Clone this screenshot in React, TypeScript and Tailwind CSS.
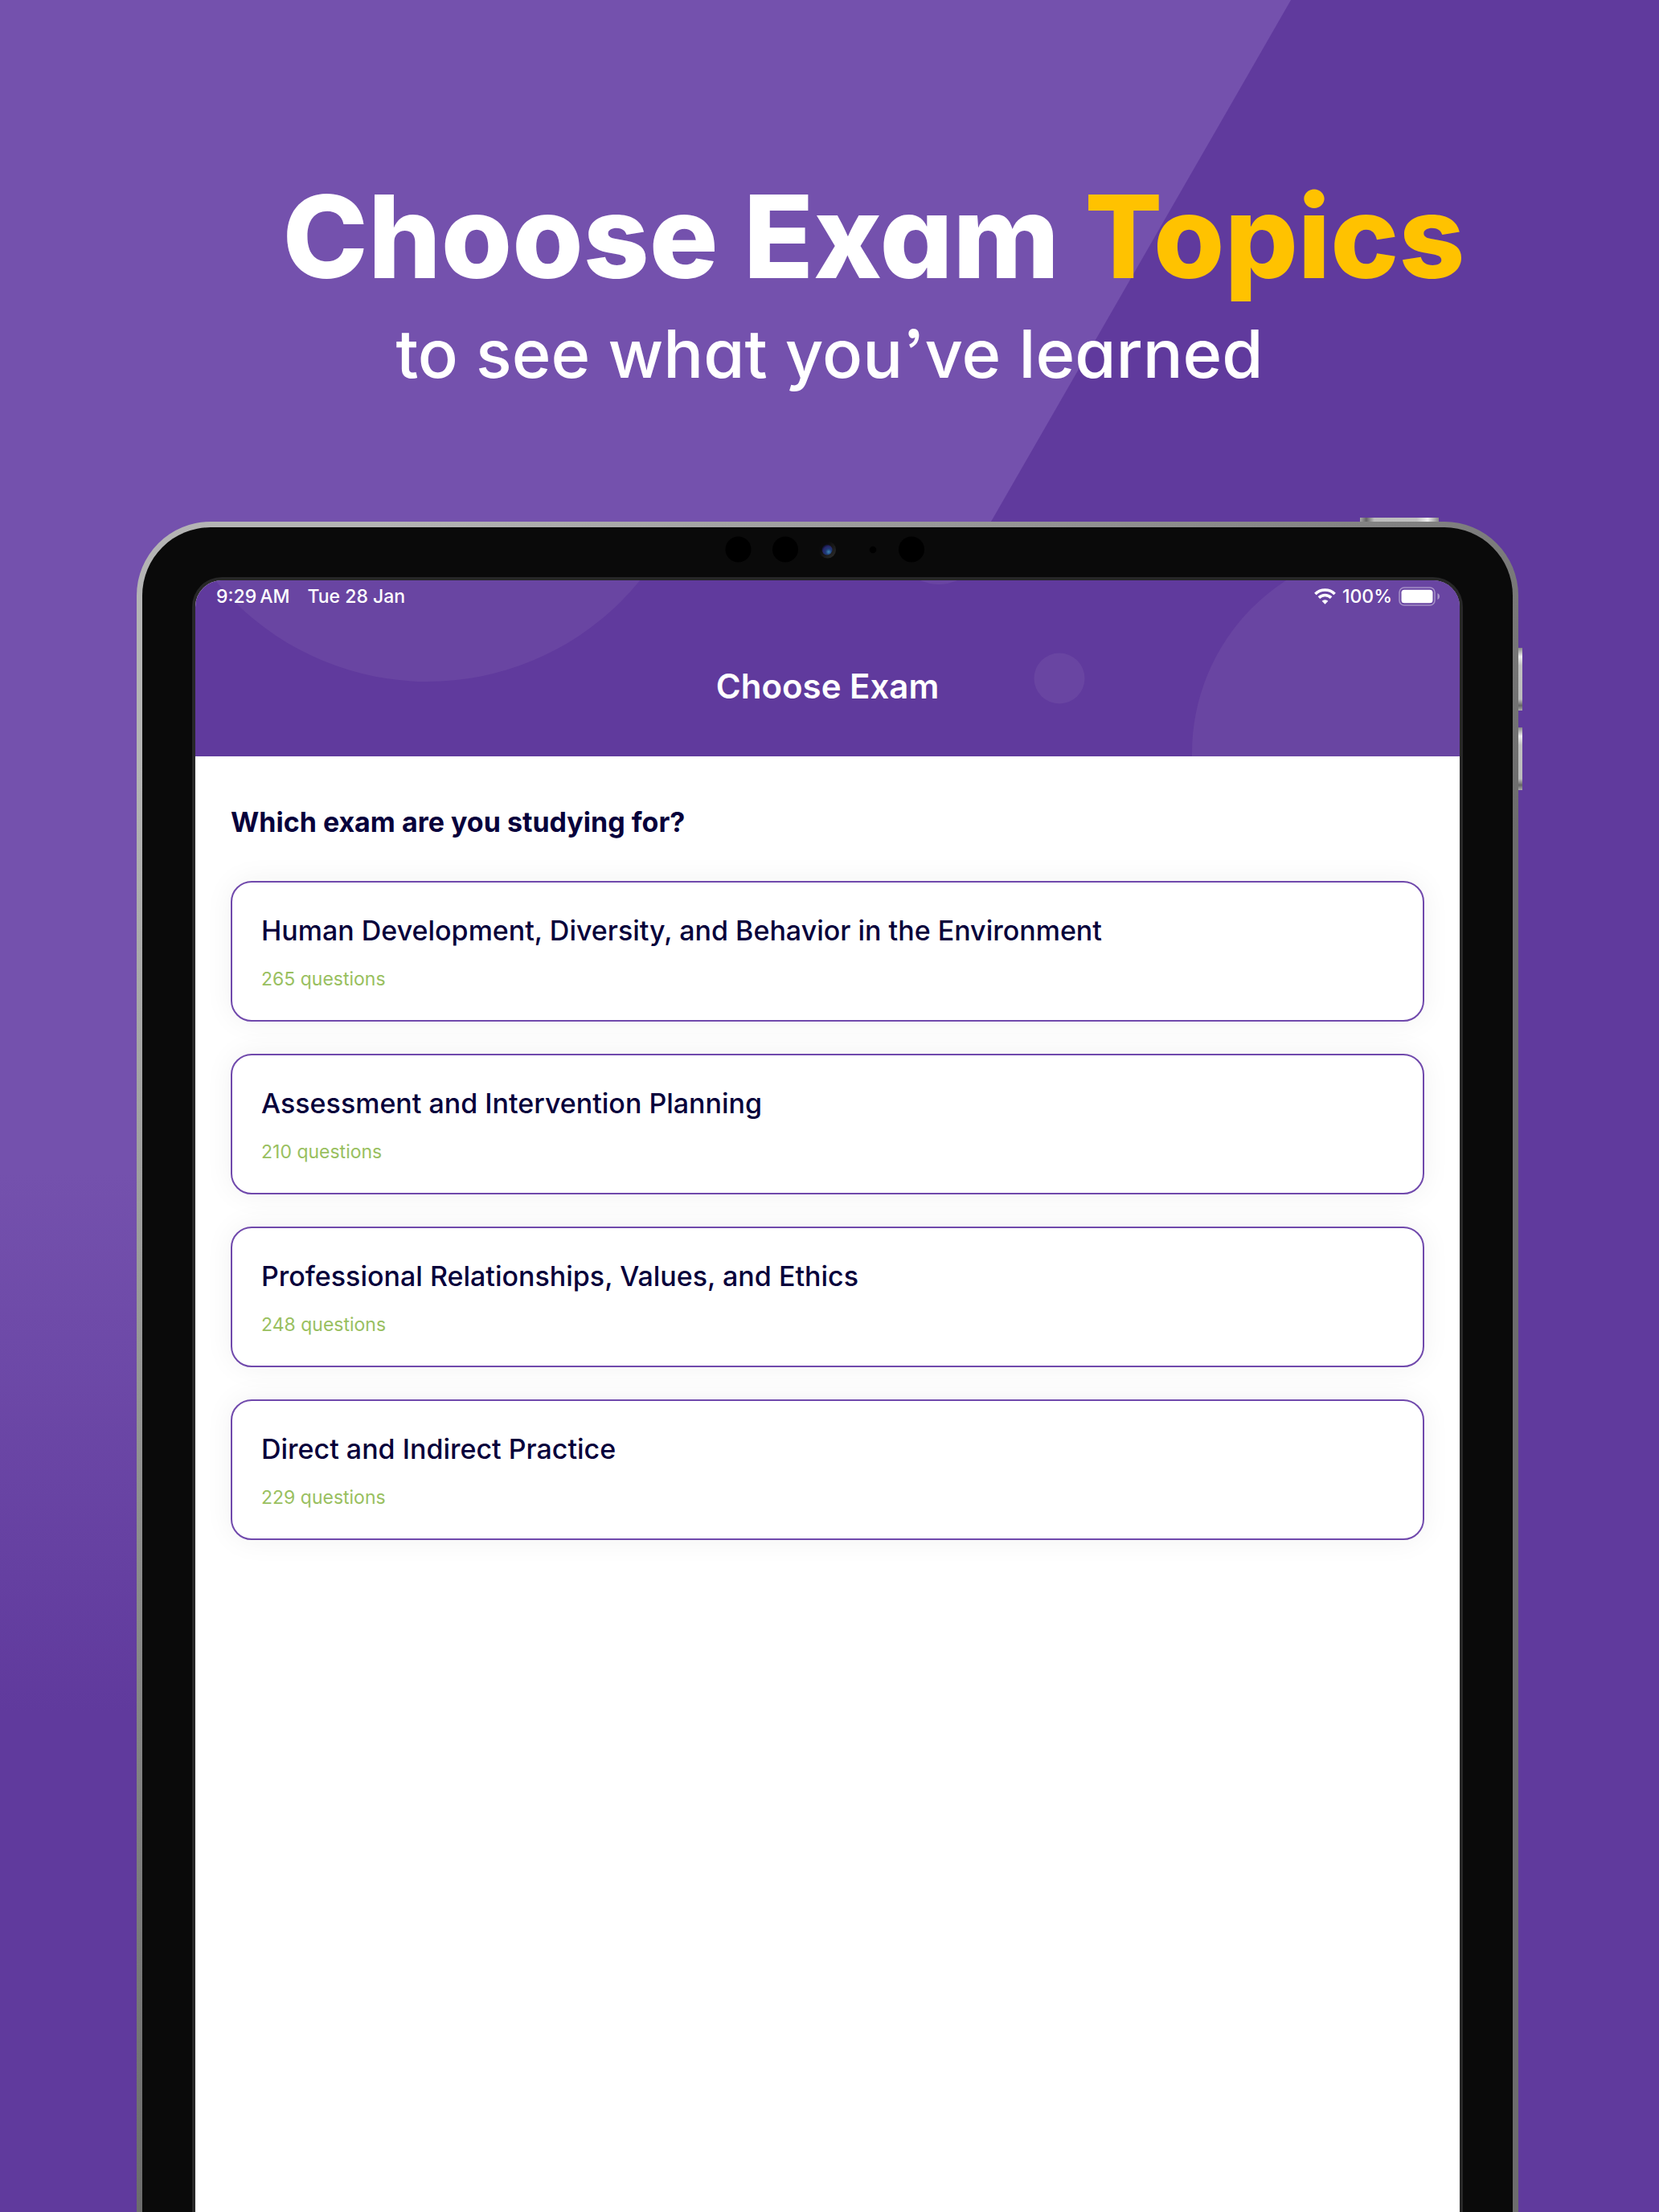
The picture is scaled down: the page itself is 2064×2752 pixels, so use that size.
const EXAMS = [
  {
    title: "Human Development, Diversity, and Behavior in the Environment",
    questions: 265,
  },
  {
    title: "Assessment and Intervention Planning",
    questions: 210,
  },
  {
    title: "Professional Relationships, Values, and Ethics",
    questions: 248,
  },
  {
    title: "Direct and Indirect Practice",
    questions: 229,
  },
];

const Backdrop = () => (
  <svg className="absolute inset-0 size-full" viewBox="0 0 2064 2752" preserveAspectRatio="none" aria-hidden="true">
    <defs>
      <linearGradient id="beam" gradientUnits="userSpaceOnUse" x1="0" y1="1460" x2="0" y2="2130">
        <stop offset="0" stopColor="#7451ad" />
        <stop offset="1" stopColor="#603a9d" />
      </linearGradient>
    </defs>
    <path d="M0 0H1606L0 2794Z" fill="url(#beam)" />
  </svg>
);

const WifiIcon = () => (
  <svg width="27" height="20" viewBox="0 0 27 20" fill="none" stroke="#fff" strokeWidth="3.6" aria-hidden="true">
    <path d="M1.4 7a17.2 17.2 0 0 1 24.2 0" />
    <path d="M5.9 11.6a10.8 10.8 0 0 1 15.2 0" />
    <path d="M13.5 19.8l-3.9-4a5.5 5.5 0 0 1 7.8 0z" fill="#fff" stroke="none" />
  </svg>
);

const BatteryIcon = () => (
  <svg width="52" height="24" viewBox="0 0 52 24" aria-hidden="true">
    <rect x="1" y="1" width="44" height="22" rx="6" fill="none" stroke="#fff" strokeOpacity=".4" strokeWidth="1.6" />
    <rect x="3.5" y="3.7" width="39" height="16.6" rx="3.6" fill="#fff" />
    <path d="M48.5 8v8c1.6-.7 2.5-2.2 2.5-4s-.9-3.3-2.5-4z" fill="#fff" fillOpacity=".45" />
  </svg>
);

const Sensors = () => (
  <svg className="absolute top-[10px] left-1/2 -translate-x-1/2" width="260" height="38" viewBox="0 0 260 38" aria-hidden="true">
    <defs>
      <linearGradient id="lensRing" x1="0" y1="0" x2="1" y2="1">
        <stop offset=".3" stopColor="#0b0b0b" />
        <stop offset="1" stopColor="#303030" />
      </linearGradient>
      <radialGradient id="lens" cx=".65" cy=".7" r=".7">
        <stop offset="0" stopColor="#3f86b4" />
        <stop offset=".4" stopColor="#1d3c78" />
        <stop offset=".75" stopColor="#28266a" />
        <stop offset="1" stopColor="#0c1230" />
      </radialGradient>
    </defs>
    <circle cx="18.5" cy="17.5" r="16" fill="#000" />
    <circle cx="77" cy="17.5" r="16" fill="#000" />
    <circle cx="129.5" cy="18" r="10.5" fill="url(#lensRing)" />
    <circle cx="129" cy="18" r="6.5" fill="url(#lens)" />
    <circle cx="186" cy="18" r="4.3" fill="#000" />
    <circle cx="234" cy="17.5" r="16" fill="#000" />
  </svg>
);

const ExamCard = ({ title, questions }: { title: string, questions: number }) => (
  <button className="flex flex-col items-start gap-[22px] w-full h-[175px] pt-[38px] px-[36px] text-left bg-white border-2 border-[#7049ac] rounded-[26px] shadow-[0_0_36px_rgba(0,0,0,0.06)]">
    <span className="text-[34px] leading-[44px] font-medium text-[#07003b]">{title}</span>
    <span className="text-[23px] leading-[32px] text-[#99c05f]">{questions} questions</span>
  </button>
);

const App = () => {
  return (
    <main className="relative flex flex-col h-screen overflow-hidden bg-[#603a9d] font-[Inter,sans-serif]">
      <Backdrop />

      <header className="relative flex flex-col items-center h-[649px] shrink-0 pt-[212px] text-white whitespace-nowrap">
        <h1 className="pl-[110px] text-[143px] leading-[164px] font-extrabold [font-feature-settings:'cv11','ss03']">
          Choose Exam <span className="text-[#ffc200]">Topics</span>
        </h1>
        <p className="mt-4 text-[83px] leading-[96px] font-medium [font-feature-settings:'cv11','ss03']">to see what you’ve learned</p>
      </header>

      <div className="relative flex flex-col flex-1 ml-[170px] mr-[175px]">
        <div className="absolute -top-[5px] right-[99px] w-[98px] h-[6px] bg-[linear-gradient(90deg,#aaa,#666_8%,#bcbcbc_18%,#c0c0c0_72%,#eee_86%,#888)]" />
        <div className="absolute top-[157px] -right-[5px] w-[6px] h-[78px] bg-[linear-gradient(#888,#eee_14%,#c0c0c0_28%,#bcbcbc_82%,#666_92%,#aaa)]" />
        <div className="absolute top-[256px] -right-[5px] w-[6px] h-[78px] bg-[linear-gradient(#888,#eee_14%,#c0c0c0_28%,#bcbcbc_82%,#666_92%,#aaa)]" />

        <div className="relative flex flex-col flex-1 rounded-t-[92px] pt-[7px] px-[7px] bg-[linear-gradient(135deg,#b4b4b4_8%,#6c6c6c_55%)]">
          <div className="relative flex flex-col flex-1 rounded-t-[85px] pt-[62px] px-[62px] bg-[#0a0a0a]">
            <Sensors />

            <div className="flex flex-col flex-1 rounded-t-[37px] pt-1 px-1 bg-[#272727]">
              <div className="flex flex-col flex-1 rounded-t-[33px] overflow-hidden bg-white">
                <div className="relative h-[219px] shrink-0 bg-[#603a9d] overflow-hidden text-white">
                  <svg className="absolute inset-0 size-full" viewBox="0 0 1573 219" preserveAspectRatio="none" fill="#6945a2" aria-hidden="true">
                    <circle cx="289" cy="-214" r="340" />
                    <circle cx="925" cy="-51" r="56" />
                    <circle cx="1075" cy="122" r="31.5" />
                    <circle cx="1496" cy="215" r="256" />
                  </svg>

                  <div className="relative flex items-center justify-between pt-1 pl-[26px] pr-[24px] text-[23px] leading-[32px] font-medium">
                    <div className="flex gap-[22px]">
                      <span>9:29{"\u2009"}AM</span>
                      <span>Tue 28 Jan</span>
                    </div>
                    <div className="flex items-center gap-2">
                      <WifiIcon />
                      <span>100%</span>
                      <BatteryIcon />
                    </div>
                  </div>

                  <h2 className="relative mt-[70px] text-center text-[42px] leading-[52px] font-semibold">Choose Exam</h2>
                </div>

                <section className="flex flex-col px-[44px] pt-[58px]">
                  <h3 className="mb-[50px] text-[34px] leading-[47px] font-bold text-[#07003b]">Which exam are you studying for?</h3>
                  <div className="flex flex-col gap-10">
                    {EXAMS.map((exam) => (
                      <ExamCard key={exam.title} {...exam} />
                    ))}
                  </div>
                </section>
              </div>
            </div>
          </div>
        </div>
      </div>
    </main>
  );
};

export default App;
